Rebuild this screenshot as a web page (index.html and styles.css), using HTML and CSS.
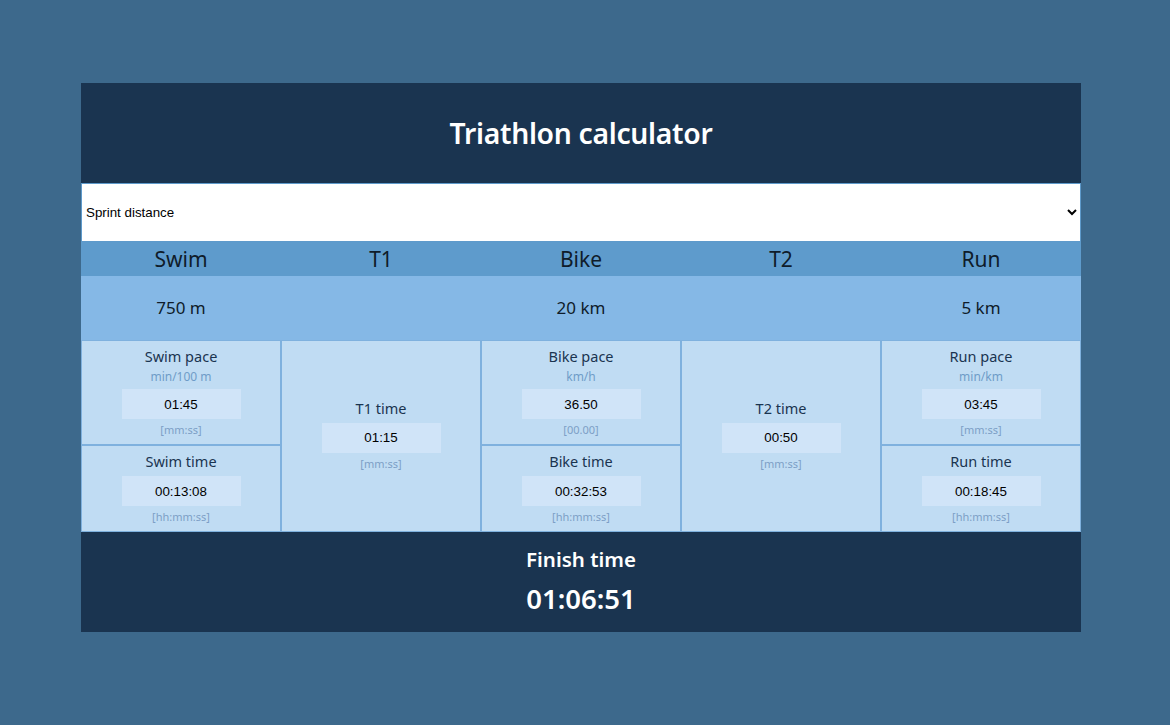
FILE: index.html
```html
<!DOCTYPE html>
<html lang="en">
<head>
<meta charset="utf-8">
<title>Triathlon calculator</title>
<link rel="stylesheet" href="styles.css">
</head>
<body>
<div class="page">
  <main class="calc">
    <header class="calc-header">
      <h1 class="title">Triathlon calculator</h1>
    </header>
    <select class="distance-select">
      <option>Sprint distance</option>
      <option>Olympic distance</option>
      <option>Half Ironman</option>
      <option>Ironman</option>
    </select>
    <div class="legs">
      <div class="leg-name">Swim</div>
      <div class="leg-name">T1</div>
      <div class="leg-name">Bike</div>
      <div class="leg-name">T2</div>
      <div class="leg-name">Run</div>
    </div>
    <div class="distances">
      <div class="dist">750 m</div>
      <div class="dist"></div>
      <div class="dist">20 km</div>
      <div class="dist"></div>
      <div class="dist">5 km</div>
    </div>
    <div class="grid">
      <div class="col">
        <div class="cell cell-top">
          <div class="cell-label">Swim pace</div>
          <div class="cell-unit">min/100 m</div>
          <input class="cell-input" type="text" value="01:45">
          <div class="cell-hint">[mm:ss]</div>
        </div>
        <div class="cell cell-bottom">
          <div class="cell-label">Swim time</div>
          <input class="cell-input" type="text" value="00:13:08">
          <div class="cell-hint">[hh:mm:ss]</div>
        </div>
      </div>
      <div class="col">
        <div class="cell cell-full">
          <div class="cell-label">T1 time</div>
          <input class="cell-input" type="text" value="01:15">
          <div class="cell-hint">[mm:ss]</div>
        </div>
      </div>
      <div class="col">
        <div class="cell cell-top">
          <div class="cell-label">Bike pace</div>
          <div class="cell-unit">km/h</div>
          <input class="cell-input" type="text" value="36.50">
          <div class="cell-hint">[00.00]</div>
        </div>
        <div class="cell cell-bottom">
          <div class="cell-label">Bike time</div>
          <input class="cell-input" type="text" value="00:32:53">
          <div class="cell-hint">[hh:mm:ss]</div>
        </div>
      </div>
      <div class="col">
        <div class="cell cell-full">
          <div class="cell-label">T2 time</div>
          <input class="cell-input" type="text" value="00:50">
          <div class="cell-hint">[mm:ss]</div>
        </div>
      </div>
      <div class="col">
        <div class="cell cell-top">
          <div class="cell-label">Run pace</div>
          <div class="cell-unit">min/km</div>
          <input class="cell-input" type="text" value="03:45">
          <div class="cell-hint">[mm:ss]</div>
        </div>
        <div class="cell cell-bottom">
          <div class="cell-label">Run time</div>
          <input class="cell-input" type="text" value="00:18:45">
          <div class="cell-hint">[hh:mm:ss]</div>
        </div>
      </div>
    </div>
    <footer class="finish">
      <div class="finish-label">Finish time</div>
      <div class="finish-time">01:06:51</div>
    </footer>
  </main>
</div>
</body>
</html>
```

FILE: styles.css
```css
html, body {
  margin: 0;
  padding: 0;
  background: #3d698c;
  height: 100%;
}

body {
  font-family: "Noto Sans", "Open Sans", sans-serif;
}

.page {
  padding: 83px 0 0 81px;
}

.calc {
  width: 1000px;
  display: flex;
  flex-direction: column;
}

.calc-header {
  height: 100px;
  background: #1a3450;
  display: flex;
  align-items: center;
  justify-content: center;
}

.title {
  margin: 0;
  color: #ffffff;
  font-size: 28.3px;
  font-weight: 600;
  letter-spacing: -0.3px;
}

.distance-select {
  height: 59px;
  width: 1000px;
  margin: 0;
  padding: 0;
  border: 1px solid #5e9acb;
  background: #ffffff;
  font-family: "Liberation Sans", Arial, sans-serif;
  font-size: 13.33px;
  color: #000;
  box-sizing: border-box;
}

.legs {
  display: flex;
  height: 34px;
  background: #5e9bcc;
}

.leg-name {
  width: 200px;
  text-align: center;
  font-size: 21px;
  line-height: 34px;
  color: #0f1c2a;
}

.distances {
  display: flex;
  height: 64px;
  background: #85b8e6;
}

.dist {
  width: 200px;
  text-align: center;
  font-size: 17px;
  line-height: 64px;
  color: #0f1c2a;
}

.grid {
  display: flex;
  height: 192px;
  background: #c0dcf3;
}

.col {
  width: 200px;
  display: flex;
  flex-direction: column;
}

.cell {
  border: 1px solid #7fb1de;
  box-sizing: border-box;
  display: flex;
  flex-direction: column;
  align-items: center;
  background: #c0dcf3;
}

.cell-top {
  height: 105px;
  padding-top: 6px;
}

.cell-bottom {
  height: 87px;
  padding-top: 6px;
}

.cell-full {
  height: 192px;
  justify-content: center;
  padding-bottom: 2px;
}

.cell-label {
  font-size: 14.5px;
  line-height: 18px;
  margin-bottom: 2px;
  color: #1a3450;
}

.cell-unit {
  margin-top: 2px;
  font-size: 12px;
  line-height: 16px;
  color: #6f9cc8;
}

.cell-input {
  margin-top: 4px;
  width: 119px;
  height: 30px;
  box-sizing: border-box;
  border: none;
  padding: 0;
  background: #d0e4f8;
  text-align: center;
  font-family: "Liberation Sans", Arial, sans-serif;
  font-size: 13.33px;
  color: #000;
  outline: none;
}

.cell-hint {
  margin-top: 3px;
  font-size: 11px;
  line-height: 16px;
  color: #7d9fc6;
}

.finish {
  height: 100px;
  background: #1a3450;
  color: #ffffff;
  display: flex;
  flex-direction: column;
  align-items: center;
  justify-content: center;
}

.finish-label {
  font-size: 20.5px;
  font-weight: 600;
  line-height: 28px;
}

.finish-time {
  font-size: 27.5px;
  font-weight: 600;
  line-height: 40px;
  margin-top: 6px;
}
```
